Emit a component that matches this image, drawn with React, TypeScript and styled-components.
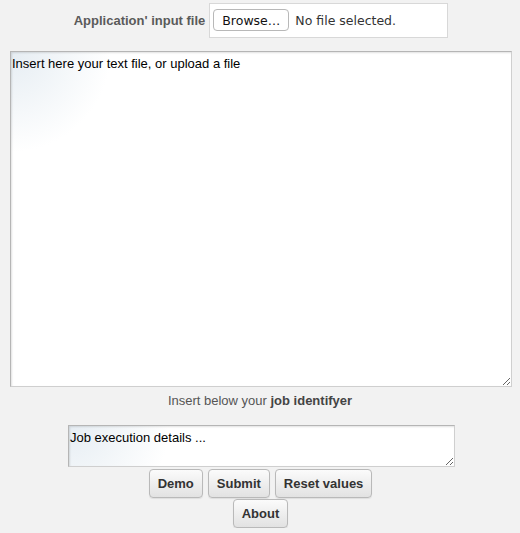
import React from "react";
import styled, { createGlobalStyle } from "styled-components";

const Global = createGlobalStyle`
  html, body {
    margin: 0;
    padding: 0;
    background: #f2f2f2;
    font-family: "Liberation Sans", Arial, Helvetica, sans-serif;
    font-size: 13px;
    color: #555;
  }
`;

const Page = styled.div`
  width: 520px;
  padding-top: 3px;
  display: flex;
  flex-direction: column;
`;

const TopRow = styled.div`
  display: flex;
  justify-content: center;
  align-items: center;
  gap: 4px;
  height: 34px;
  padding-left: 2px;
`;

const Label = styled.span`
  font-weight: bold;
  font-size: 13px;
  color: #5a5a5a;
`;

const FileBox = styled.div`
  box-sizing: border-box;
  width: 239px;
  height: 35px;
  background: #fff;
  border: 1px solid #d8d8d8;
  display: flex;
  align-items: center;
  gap: 6px;
  padding-left: 3px;
`;

const BrowseButton = styled.button`
  box-sizing: border-box;
  height: 22px;
  width: 76px;
  padding: 0;
  background: #fff;
  border: 1px solid #b8b8b8;
  border-radius: 4px;
  font-family: "DejaVu Sans", sans-serif;
  font-size: 12.5px;
  color: #111;
`;

const FileName = styled.span`
  font-family: "DejaVu Sans", sans-serif;
  font-size: 12.5px;
  color: #333;
`;

const Area = styled.textarea<{ $w: number; $h: number; $left: number }>`
  box-sizing: border-box;
  display: block;
  width: ${(p) => p.$w}px;
  height: ${(p) => p.$h}px;
  margin-left: ${(p) => p.$left}px;
  padding: 4px 1px 1px 1px;
  border: 1px solid #cfcfcf;
  border-top-color: #b5b5b5;
  border-left-color: #b5b5b5;
  box-shadow: inset 1px 1px 2px rgba(0, 0, 0, 0.12);
  background: radial-gradient(
      circle at 0 0,
      #e6edf3 0px,
      #f1f5f8 45px,
      #ffffff 100px
    ),
    #fff;
  font-family: "Liberation Sans", Arial, sans-serif;
  font-size: 13px;
  line-height: 16px;
  color: #000;
  outline: none;
`;

const BigArea = styled(Area)`
  margin-top: 14px;
`;

const Hint = styled.div`
  margin-top: 5px;
  height: 18px;
  line-height: 18px;
  text-align: center;
  color: #555;
  font-size: 13px;
  b {
    color: #444;
  }
`;

const SmallArea = styled(Area)`
  margin-top: 15px;
`;

const ButtonRow = styled.div<{ $top: number }>`
  display: flex;
  justify-content: center;
  gap: 5px;
  margin-top: ${(p) => p.$top}px;
  padding-left: 1px;
`;

const Btn = styled.button`
  box-sizing: border-box;
  height: 29px;
  padding: 0 8px;
  border: 1px solid #b9b9b9;
  border-radius: 4px;
  background: linear-gradient(#fbfbfb, #e2e2e2);
  box-shadow: 0 1px 1px rgba(0, 0, 0, 0.08);
  font-family: "Liberation Sans", Arial, sans-serif;
  font-weight: bold;
  font-size: 13px;
  color: #333;
`;

export default function App() {
  return (
    <>
      <Global />
      <Page>
        <TopRow>
          <Label>Application' input file</Label>
          <FileBox>
            <BrowseButton>Browse…</BrowseButton>
            <FileName>No file selected.</FileName>
          </FileBox>
        </TopRow>
        <BigArea
          $w={502}
          $h={336}
          $left={10}
          defaultValue="Insert here your text file, or upload a file"
        />
        <Hint>
          Insert below your <b>job identifyer</b>
        </Hint>
        <SmallArea
          $w={387}
          $h={42}
          $left={68}
          defaultValue="Job execution details ..."
        />
        <ButtonRow $top={2}>
          <Btn>Demo</Btn>
          <Btn>Submit</Btn>
          <Btn>Reset values</Btn>
        </ButtonRow>
        <ButtonRow $top={1}>
          <Btn>About</Btn>
        </ButtonRow>
      </Page>
    </>
  );
}
